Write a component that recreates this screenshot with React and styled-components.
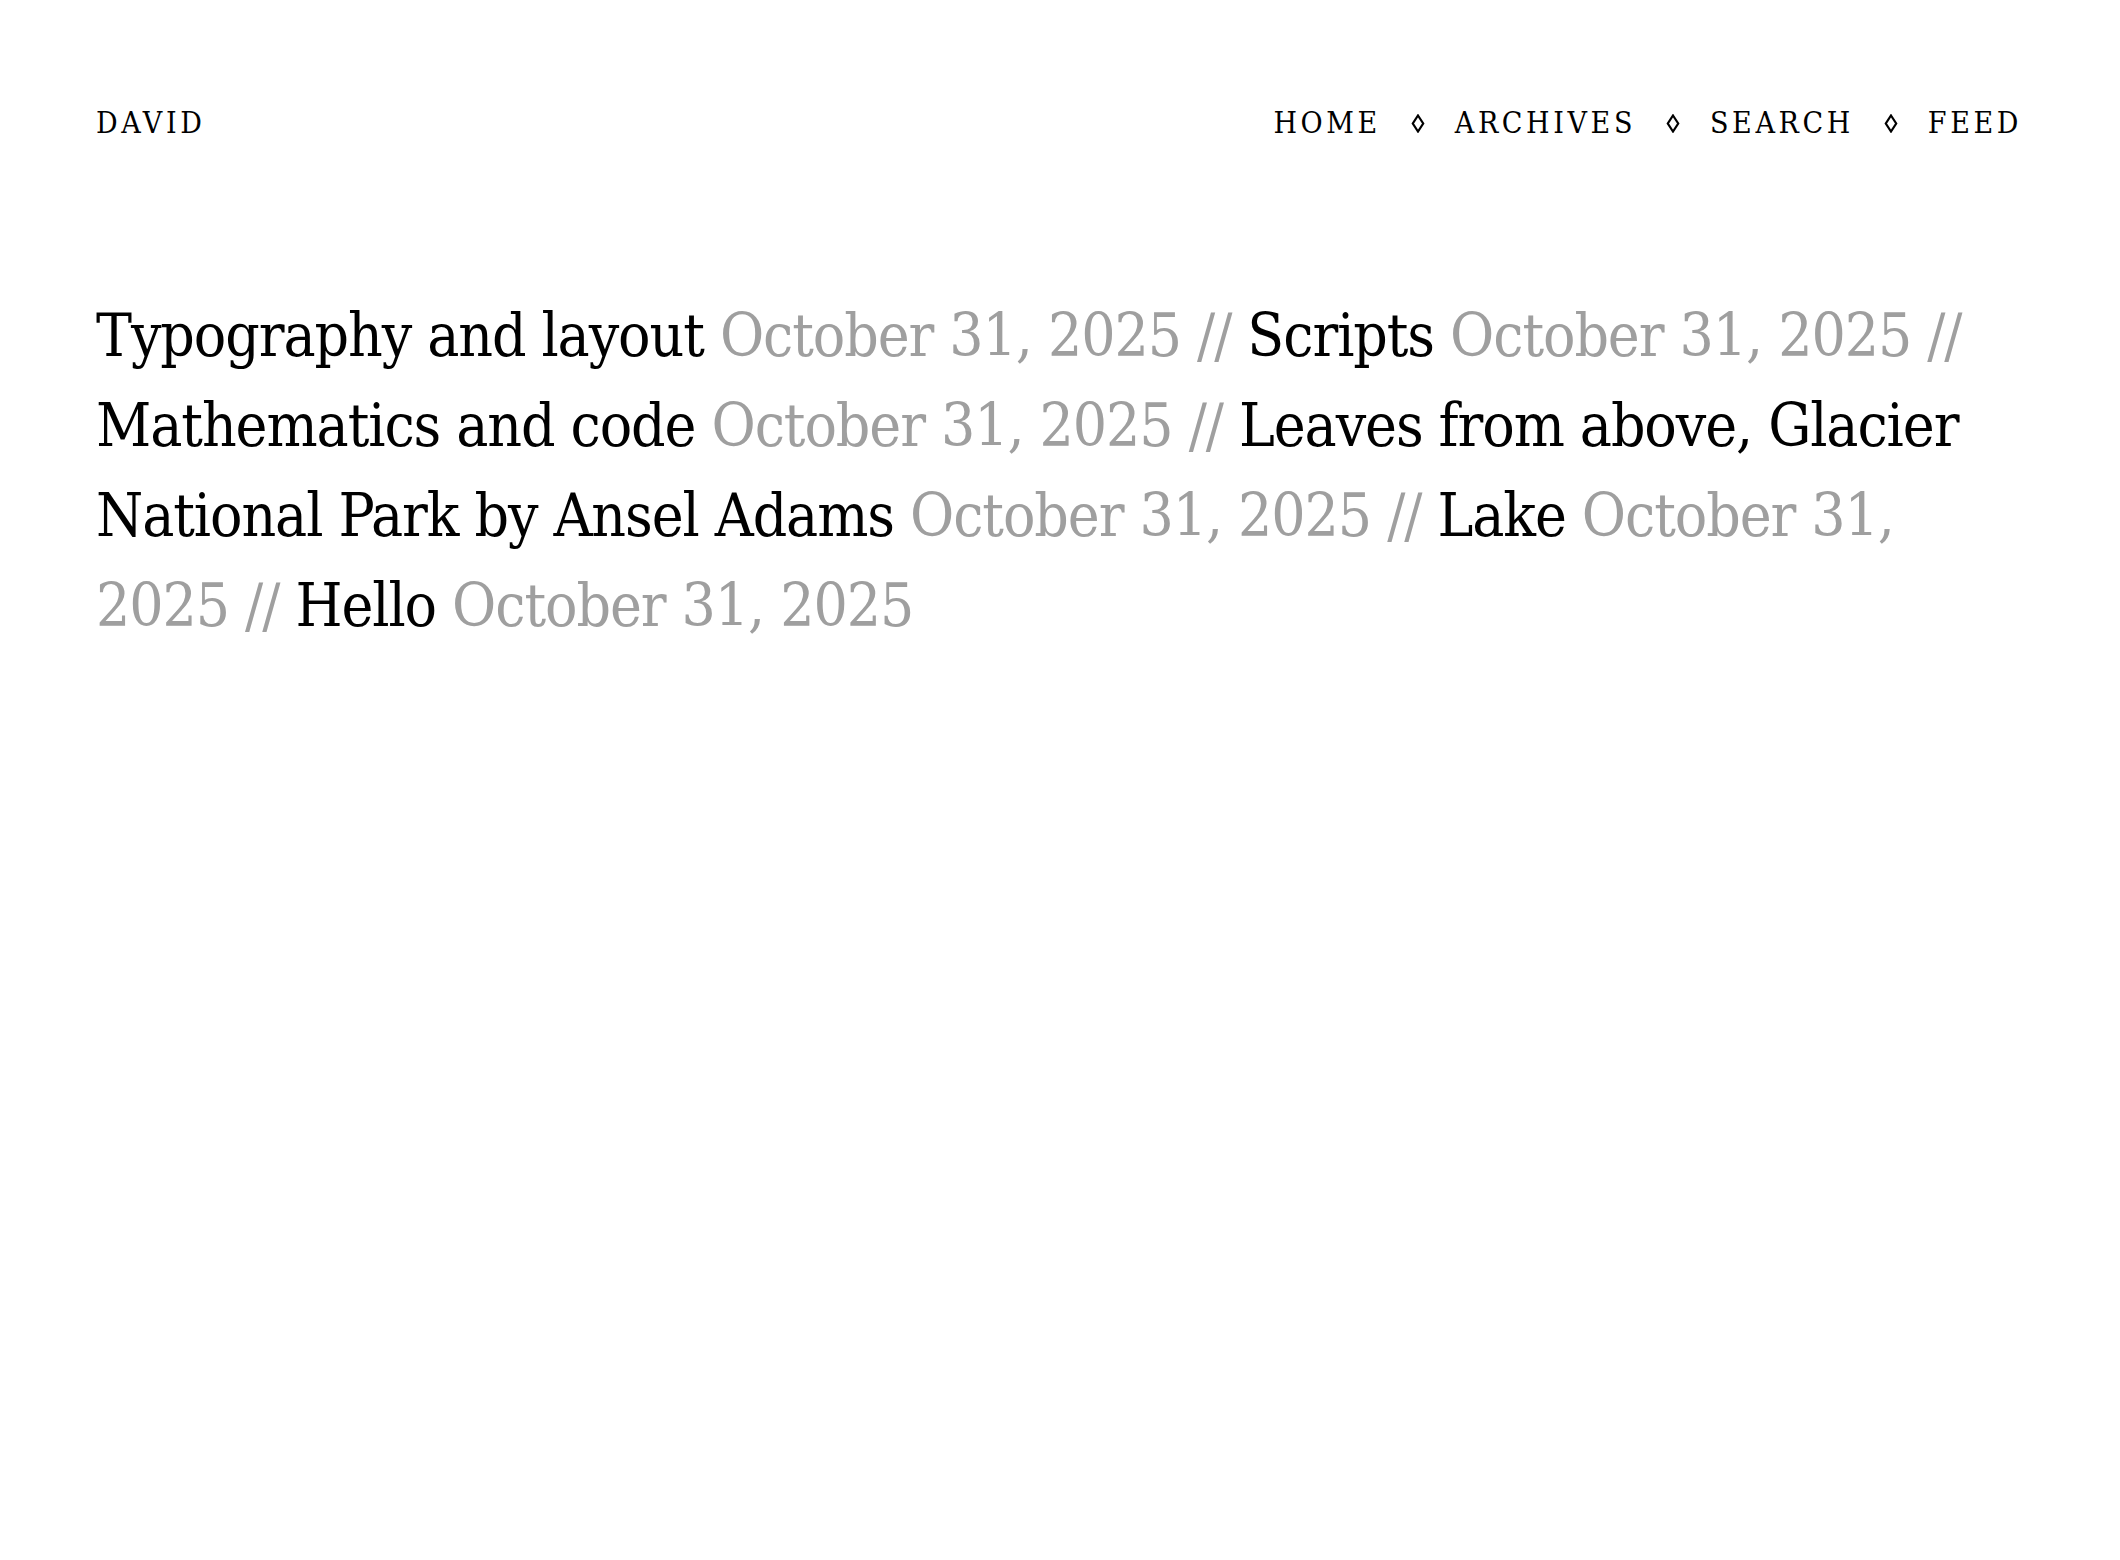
import React from "react";
import styled, { createGlobalStyle } from "styled-components";

const GlobalStyle = createGlobalStyle`
  html, body {
    margin: 0;
    padding: 0;
    background: #fff;
  }
  body {
    font-family: "DejaVu Serif Condensed", "DejaVu Serif", serif;
    font-stretch: condensed;
    color: #000;
  }
`;

const Page = styled.div`
  padding: 108px 98px 96px 96px;
`;

const Header = styled.header`
  display: flex;
  justify-content: space-between;
  align-items: center;
  font-size: 30px;
  letter-spacing: 0.12em;
  text-transform: uppercase;
  line-height: 1;
`;

const Brand = styled.a`
  color: #000;
  text-decoration: none;
`;

const Nav = styled.nav`
  display: flex;
  align-items: center;
  gap: 30px;
`;

const NavLink = styled.a`
  color: #000;
  text-decoration: none;
`;

const Sep = styled.svg`
  width: 14px;
  height: 19px;
  display: block;
`;

const Posts = styled.p`
  margin: 152px 0 0;
  font-size: 60px;
  line-height: 1.5;
  letter-spacing: -0.018em;
`;

const Title = styled.a`
  color: #000;
  text-decoration: none;
`;

const Meta = styled.span`
  color: #9f9f9f;
`;

const posts = [
  "Typography and layout",
  "Scripts",
  "Mathematics and code",
  "Leaves from above, Glacier National Park by Ansel Adams",
  "Lake",
  "Hello",
];

const navItems = ["Home", "Archives", "Search", "Feed"];

const Lozenge = () => (
  <Sep viewBox="0 0 14 19" aria-hidden="true">
    <path d="M7 1.5 L12.2 9.5 L7 17.5 L1.8 9.5 Z" fill="none" stroke="#000" strokeWidth="2.2" />
  </Sep>
);

export default function App() {
  return (
    <Page>
      <GlobalStyle />
      <Header>
        <Brand href="#">David</Brand>
        <Nav>
          {navItems.map((item, i) => (
            <React.Fragment key={item}>
              {i > 0 && <Lozenge />}
              <NavLink href="#">{item}</NavLink>
            </React.Fragment>
          ))}
        </Nav>
      </Header>
      <Posts>
        {posts.map((title, i) => (
          <React.Fragment key={title}>
            <Title href="#">{title}</Title>{" "}
            <Meta>
              October 31, 2025{i < posts.length - 1 ? " // " : ""}
            </Meta>
          </React.Fragment>
        ))}
      </Posts>
    </Page>
  );
}
